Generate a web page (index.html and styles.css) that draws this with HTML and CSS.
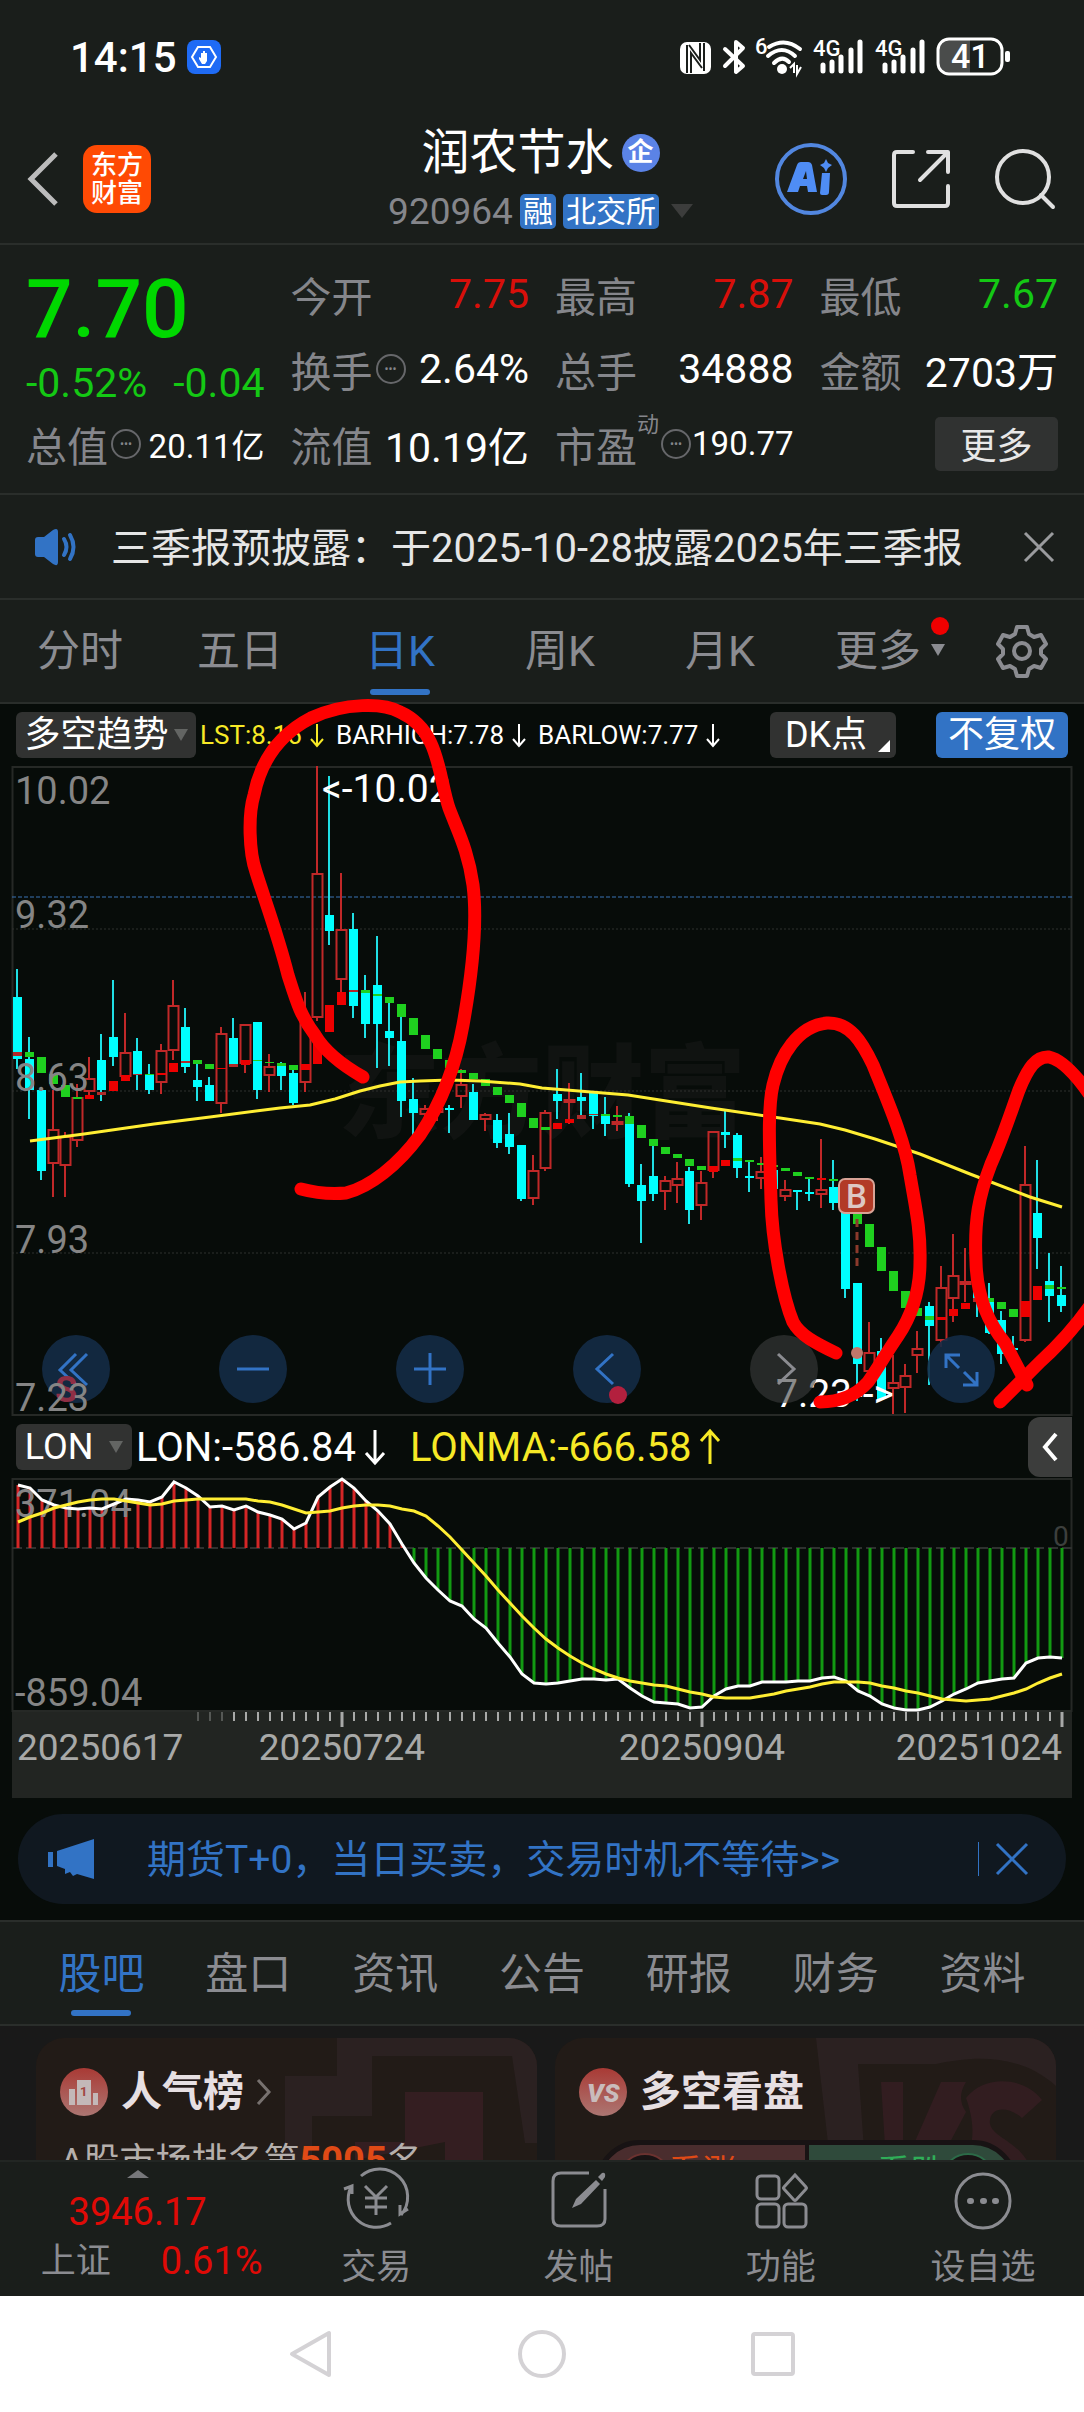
FILE: index.html
```html
<!DOCTYPE html>
<html lang="zh-CN">
<head>
    <meta charset="UTF-8">
    <meta name="viewport" content="width=device-width, initial-scale=1.0">
    <title>润农节水 920964</title>
    <link rel="stylesheet" href="styles.css">
</head>
<body>
    <div class="app">
        <div class="status">
            <span class="time">14:15</span>
            <svg class="status-app" viewBox="0 0 34 34">
                <rect width="34" height="34" rx="8" fill="#1f6bf5"/>
                <path d="M11 7h12l6 10-6 10H11L5 17z" fill="none" stroke="#fff" stroke-width="2"/>
                <path d="M12 17l2 1v-5h2v-2h2v2h2v8l-2 3h-3l-3-5z" fill="#fff"/>
            </svg>
            <svg class="status-icons" viewBox="678 36 334 40">
                <rect x="680" y="41" width="31" height="32" rx="7" fill="#fff"/>
                <path d="M687 72V44M704 42v28" fill="none" stroke="#1a1e1b" stroke-width="2"/>
                <path d="M691 72V52l11 15M689 44l11 15V42" fill="none" stroke="#1a1e1b" stroke-width="2"/>
                <path d="M725 48l18 17-7 6V41l7 6-18 18" fill="none" stroke="#fff" stroke-width="4" stroke-linejoin="round" stroke-linecap="round"/>
                <text x="755" y="53" class="status-small">6</text>
                <g fill="none" stroke="#fff" stroke-width="4" stroke-linecap="round">
                    <path d="M769 46q16-10 31 2M768 55q14-12 27 0M774 62q8-8 15-1"/>
                </g>
                <circle cx="782" cy="68" r="5" fill="#fff"/>
                <path d="M790 67l4-4v9M797 64v9l4-7" stroke="#fff" stroke-width="2" fill="none"/>
                <text x="813" y="55" class="status-small">4G</text>
                <path d="M823 64v6M832 61v9M841 56v14M851 49v21M860 41v29" stroke="#fff" stroke-width="5" stroke-linecap="round"/>
                <text x="875" y="55" class="status-small">4G</text>
                <path d="M885 64v6M894 61v9M903 56v14M913 49v21M922 41v29" stroke="#fff" stroke-width="5" stroke-linecap="round"/>
                <path d="M948 39h22v33h-22q-9 0-9-9V48q0-9 9-9z" fill="#4a4c4b"/>
                <rect x="938" y="38" width="64" height="35" rx="11" fill="none" stroke="#fff" stroke-width="3"/>
                <rect x="1005" y="50" width="5" height="11" rx="2" fill="#fff"/>
                <text x="951" y="67" class="status-battery">41</text>
            </svg>
        </div>

        <header class="header">
            <button class="back" aria-label="返回">
                <svg width="34" height="56" viewBox="0 0 34 56"><path d="M30 3L5 28l25 25" fill="none" stroke="#bcbcbc" stroke-width="5"/></svg>
            </button>
            <a class="logo" href="#">东方<br>财富</a>
            <div class="stock">
                <h1>润农节水<span class="ent">企</span></h1>
                <div class="code">920964<span class="tag">融</span><span class="tag">北交所</span><i class="arrow"></i></div>
            </div>
            <button class="head-btn" aria-label="AI">
                <svg width="74" height="74" viewBox="0 0 74 74">
                    <circle cx="37" cy="37" r="34" fill="none" stroke="#5287e0" stroke-width="4"/>
                    <path d="M13 50l10-27q1-3 4-3h7q3 0 4 3l5 27h-9l-1-6h-7l-2 6zM29 37h4l-1-8z" fill="#4f8df5" fill-rule="evenodd"/>
                    <path d="M48 31h8l-1 19q0 3-3 3h-4q-2 0-2-2zM52 17l2 4 4 2-4 3-2 4-2-4-4-3 4-2z" fill="#4f8df5"/>
                </svg>
            </button>
            <button class="head-btn" aria-label="分享">
                <svg width="60" height="60" viewBox="0 0 60 60" fill="none" stroke="#e0e0e0" stroke-width="4" stroke-linecap="round" stroke-linejoin="round">
                    <path d="M22 3H6q-3 0-3 3v48q0 3 3 3h48q3 0 3-3V37M37 3h20v20M56 4L29 31"/>
                </svg>
            </button>
            <button class="head-btn" aria-label="搜索">
                <svg width="62" height="62" viewBox="0 0 62 62" fill="none" stroke="#e0e0e0" stroke-width="4" stroke-linecap="round">
                    <circle cx="29" cy="29" r="26"/><path d="M47 47l12 12"/>
                </svg>
            </button>
        </header>

        <section class="quote">
            <div class="now">
                <strong>7.70</strong>
                <span>-0.52%</span><span>-0.04</span>
            </div>
            <div class="item"><span class="name">今开</span><b class="up">7.75</b></div>
            <div class="item"><span class="name">最高</span><b class="up">7.87</b></div>
            <div class="item"><span class="name">最低</span><b class="down">7.67</b></div>
            <div class="item"><span class="name">换手</span><i class="dots">•••</i><b>2.64%</b></div>
            <div class="item"><span class="name">总手</span><b>34888</b></div>
            <div class="item"><span class="name">金额</span><b>2703万</b></div>
            <div class="item"><span class="name">总值</span><i class="dots">•••</i><b class="small">20.11亿</b></div>
            <div class="item"><span class="name">流值</span><b>10.19亿</b></div>
            <div class="item"><span class="name">市盈<sup>动</sup></span><i class="dots wide">•••</i><b class="small">190.77</b></div>
            <button class="more">更多</button>
        </section>

        <div class="notice">
            <svg width="44" height="38" viewBox="0 0 44 38">
                <path d="M2 12q0-3 3-3h6L20 2q5-3 5 2v30q0 5-5 2l-9-7H5q-3 0-3-3z" fill="#3273c5"/>
                <path d="M31 11q5 8 0 16M37 7q7 12 0 24" fill="none" stroke="#3273c5" stroke-width="4" stroke-linecap="round"/>
            </svg>
            <p>三季报预披露：于2025-10-28披露2025年三季报</p>
            <button aria-label="关闭">
                <svg width="32" height="32" viewBox="0 0 32 32"><path d="M2 2l28 28M30 2L2 30" stroke="#9a9b9e" stroke-width="3"/></svg>
            </button>
        </div>

        <nav class="periods">
            <a href="#">分时</a>
            <a href="#">五日</a>
            <a href="#" class="active">日K</a>
            <a href="#">周K</a>
            <a href="#">月K</a>
            <a href="#" class="has-dot">更多<i class="arrow"></i></a>
            <button aria-label="设置">
                <svg width="52" height="52" viewBox="0 0 52 52" fill="none" stroke="#8b8c91" stroke-width="4" stroke-linejoin="round">
                    <path d="M21 2h10l2 7 5 3 7-2 5 9-5 5v5l5 5-5 9-7-2-5 3-2 7H21l-2-7-5-3-7 2-5-9 5-5v-5l-5-5 5-9 7 2 5-3z"/>
                    <circle cx="26" cy="26" r="8"/>
                </svg>
            </button>
        </nav>

        <section class="chart">
            <div class="toolbar">
                <button class="pick">多空趋势<i class="arrow"></i></button>
                <div class="legend small-legend">
                    <span class="yellow">LST:8.16<svg class="dir" viewBox="0 0 14 26"><path d="M7 2v22M1 17l6 7 6-7"/></svg></span>
                    <span>BARHIGH:7.78<svg class="dir" viewBox="0 0 14 26"><path d="M7 2v22M1 17l6 7 6-7"/></svg></span>
                    <span>BARLOW:7.77<svg class="dir" viewBox="0 0 14 26"><path d="M7 2v22M1 17l6 7 6-7"/></svg></span>
                </div>
                <button class="dk">DK点</button>
                <button class="fq">不复权</button>
            </div>
            <div class="price">
                <svg id="price" viewBox="0 0 1084 650"></svg>
                <div class="controls">
                    <button aria-label="最早"><svg viewBox="0 0 68 68"><path d="M34 19L18 35l16 15M45 19L29 35l16 15"/></svg></button>
                    <button aria-label="缩小"><svg viewBox="0 0 68 68"><path d="M18 34h32"/></svg></button>
                    <button aria-label="放大"><svg viewBox="0 0 68 68"><path d="M18 34h32M34 18v32"/></svg></button>
                    <button aria-label="左移"><svg viewBox="0 0 68 68"><path d="M40 19L24 34l16 15"/></svg></button>
                    <button aria-label="右移" class="off"><svg viewBox="0 0 68 68"><path d="M28 19l16 15-16 15"/></svg></button>
                    <button aria-label="全屏"><svg viewBox="0 0 68 68"><path d="M19 33V20h14M20 21l12 12M50 37v13H36M49 49L37 37"/></svg></button>
                </div>
                <svg class="marks" id="marks" viewBox="0 0 1084 650"></svg>
            </div>
            <div class="toolbar">
                <button class="pick lon">LON<i class="arrow"></i></button>
                <div class="legend">
                    <span>LON:-586.84<svg class="dir" viewBox="0 0 22 36"><path d="M11 1v33M2 24l9 10 9-10"/></svg></span>
                    <span class="yellow">LONMA:-666.58<svg class="dir" viewBox="0 0 22 36"><path d="M11 35V2M2 12l9-10 9 10"/></svg></span>
                </div>
                <button class="side" aria-label="展开">
                    <svg width="18" height="30" viewBox="0 0 18 30"><path d="M15 2L4 15l11 13" fill="none" stroke="#fff" stroke-width="4"/></svg>
                </button>
            </div>
            <svg id="lon" viewBox="0 0 1084 234"></svg>
            <svg id="axis" viewBox="0 0 1084 86"></svg>
            <!-- freehand pen marks over the chart -->
            <svg class="pen" viewBox="0 704 1084 712">
                <path d="M363 1077Q328 1057 315 1035C300 1015 296 1000 288 975C278 935 263 895 256 872C249 852 248 815 254 795C262 755 284 732 311 718C345 702 384 703 400 712C440 730 438 775 449 808C458 832 468 850 473 885C478 925 472 975 463 1025C455 1070 440 1105 420 1135C398 1165 370 1187 346 1193Q323 1195 301 1189"/>
                <path d="M836 1353C815 1343 800 1335 793 1322C782 1295 772 1240 771 1200C770 1160 767 1110 773 1085C780 1055 798 1026 827 1023C850 1022 862 1042 873 1065C885 1095 905 1140 910 1175C915 1205 921 1230 920 1262C920 1290 912 1315 898 1336C885 1355 878 1368 868 1382Q850 1402 820 1402"/>
                <path d="M1027 1385L1005 1343C990 1325 977 1300 976 1262C974 1220 979 1195 991 1164C1002 1140 1010 1115 1019 1090C1028 1068 1036 1056 1049 1057Q1067 1061 1092 1098"/>
                <path d="M1092 1303Q1070 1335 1040 1362L1000 1402"/>
            </svg>
            <div class="ad">
                <svg width="48" height="40" viewBox="0 0 48 40" fill="#3273c5"><path d="M0 13h5v15H0zM9 12L46 0v40l-17-5-4 2-3-4-5 2v-5l-8-3z"/></svg>
                <a href="#">期货T+0，当日买卖，交易时机不等待&gt;&gt;</a>
                <button aria-label="关闭广告">
                    <svg width="34" height="34" viewBox="0 0 34 34"><path d="M2 2l30 30M32 2L2 32" stroke="#3273c5" stroke-width="3"/></svg>
                </button>
            </div>
        </section>

        <nav class="tabs">
            <a href="#" class="active">股吧</a>
            <a href="#">盘口</a>
            <a href="#">资讯</a>
            <a href="#">公告</a>
            <a href="#">研报</a>
            <a href="#">财务</a>
            <a href="#">资料</a>
        </nav>

        <main class="cards">
            <article class="card">
                <svg class="card-bg" viewBox="0 0 290 140">
                    <path d="M90 0h200v105h-12L265 18H125v60H65v62H38V38h52z" fill="#2b2121"/>
                    <path d="M158 54h78v86h-38v-36l-90 18v-18h50z" fill="#341e21"/>
                </svg>
                <h2>
                    <svg width="48" height="48" viewBox="0 0 48 48">
                        <defs><linearGradient id="g" x2="0" y2="1"><stop stop-color="#a93a35"/><stop offset="1" stop-color="#ac7672"/></linearGradient></defs>
                        <circle cx="24" cy="24" r="24" fill="url(#g)"/>
                        <path d="M9 21h6v16H9zM17 12h14v25H17zM33 25h5v12h-5z" fill="#c3b8b8"/>
                        <text x="20" y="28" class="medal">1</text>
                    </svg>
                    人气榜
                    <svg width="14" height="26" viewBox="0 0 14 26"><path d="M1 1l11 12L1 25" fill="none" stroke="#77716f" stroke-width="3"/></svg>
                </h2>
                <p>A股市场排名第<em>5005</em>名</p>
            </article>
            <article class="card">
                <svg class="card-bg" viewBox="0 0 290 140">
                    <path d="M50 0h240v48C250 12 200 20 170 26H92l8 114H66z" fill="#2b2121"/>
                    <path d="M115 44h22v96h-16zM175 44h25q-10 16 0 30l-35 66h-32zM200 60c20-25 60-20 76 2l-20 18c-16-14-34-10-32 6 4 16 36 18 44 54h-70c-6-14 20-30 2-80z" fill="#321d20"/>
                </svg>
                <h2>
                    <svg width="48" height="48" viewBox="0 0 48 48">
                        <circle cx="24" cy="24" r="24" fill="url(#g)"/>
                        <text x="8" y="34" class="vs">VS</text>
                    </svg>
                    多空看盘
                </h2>
                <div class="vote"><button class="bull">看涨</button><button class="bear">看跌</button></div>
            </article>
        </main>

        <nav class="bottom">
            <a href="#" class="index">
                <svg width="22" height="8" viewBox="0 0 22 8"><path d="M0 8L11 0l11 8z" fill="#77787b"/></svg>
                <b>3946.17</b>
                <span>上证<b>0.61%</b></span>
            </a>
            <a href="#">
                <svg viewBox="0 0 66 60"><path d="M18 6A28 28 0 0 1 58 45M48 53A28 28 0 0 1 8 17M1 19l8-3v8M65 39l-8 5V35M22 16l11 11 11-11M33 27v18M22 28h22M22 37h22"/></svg>
                交易
            </a>
            <a href="#">
                <svg viewBox="0 0 58 60"><path d="M39 3H11q-8 0-8 8v38q0 7 8 7h36q8 0 8-7V19"/><path d="M22 38l4-9L46 10l4 4-19 20zM48 7l4-4q4-1 3 4l-3 4z" fill="#8b8c91" stroke="none"/></svg>
                发帖
            </a>
            <a href="#">
                <svg viewBox="0 0 56 60"><rect x="4" y="6" width="22" height="23" rx="4"/><rect x="4" y="34" width="22" height="23" rx="4"/><rect x="31" y="34" width="22" height="23" rx="4"/><path d="M42 5l11 12q1 1 0 2L43 30q-1 1-2 0L31 19q-1-1 0-2z"/></svg>
                功能
            </a>
            <a href="#">
                <svg viewBox="0 0 60 60"><circle cx="30" cy="31" r="27"/><path d="M17 31h1M30 31h1M42 31h1" stroke-width="6" stroke-linecap="round"/></svg>
                设自选
            </a>
        </nav>

        <div class="sysnav">
            <button aria-label="后退"><svg width="46" height="50" viewBox="0 0 46 50"><path d="M41 4v42L4 25z"/></svg></button>
            <button aria-label="主页"><svg width="50" height="50" viewBox="0 0 50 50"><circle cx="25" cy="25" r="22"/></svg></button>
            <button aria-label="最近"><svg width="46" height="50" viewBox="0 0 46 50"><rect x="3" y="5" width="40" height="40" rx="2"/></svg></button>
        </div>
    </div>
    <script src="chart.js"></script>
</body>
</html>
```
FILE: styles.css
```css
* {
    box-sizing: border-box;
}

body {
    margin: 0;
    background: #1a1e1b;
    color: #fff;
    font-family: Roboto, "Noto Sans CJK SC", sans-serif;
}

button {
    padding: 0;
    border: none;
    background: none;
    color: inherit;
    font-family: inherit;
    cursor: pointer;
}

a {
    color: inherit;
    text-decoration: none;
}

svg {
    display: block;
    flex-shrink: 0;
    overflow: visible;
}

.app {
    display: flex;
    flex-direction: column;
    height: 100vh;
    overflow: hidden;
}

.app > * {
    flex-shrink: 0;
}

.arrow {
    display: inline-block;
    border: 7px solid transparent;
    border-top: 12px solid #636563;
    border-bottom: none;
}

/* status bar */
.status {
    display: flex;
    align-items: center;
    height: 114px;
    padding: 0 72px 0 70px;
}

.time {
    font-size: 42px;
    font-weight: 500;
    margin-right: 10px;
}

.status-app {
    width: 34px;
}

.status-icons {
    width: 334px;
    margin-left: auto;
}

.status-small {
    font-size: 22px;
    font-weight: 500;
    fill: #fff;
}

.status-battery {
    font-size: 34px;
    font-weight: 500;
    fill: #fff;
}

/* header */
.header {
    display: flex;
    align-items: center;
    height: 131px;
    padding: 0 28px 0 26px;
    border-bottom: 2px solid #2a2e2b;
}

.logo {
    display: flex;
    align-items: center;
    justify-content: center;
    width: 68px;
    height: 68px;
    margin-left: 23px;
    border-radius: 14px;
    background: #ff4a04;
    font-size: 26px;
    font-weight: 500;
    line-height: 28px;
}

.stock {
    flex: 1;
    padding: 5px 0 0 230px;
    text-align: center;
    white-space: nowrap;
}

.stock h1 {
    display: flex;
    align-items: center;
    justify-content: center;
    margin: 0;
    font-size: 48px;
    font-weight: 400;
    line-height: 60px;
}

.ent {
    width: 38px;
    height: 38px;
    margin-left: 8px;
    border-radius: 50%;
    background: #5b83e6;
    font-size: 26px;
    font-weight: 700;
    line-height: 37px;
}

.code {
    display: flex;
    align-items: center;
    justify-content: center;
    gap: 7px;
    height: 56px;
    color: #85868b;
    font-size: 37px;
}

.tag {
    padding: 0 3px;
    border-radius: 5px;
    background: #3273c5;
    color: #fff;
    font-size: 30px;
    line-height: 35px;
}

.code .arrow {
    margin-left: 5px;
    border-width: 14px 11px 0;
    border-top-color: #3c3d3c;
}

.head-btn {
    margin-left: 43px;
}

.stock + .head-btn {
    margin-left: 74px;
}

/* quote */
.quote {
    display: grid;
    grid-template-columns: repeat(4, 1fr);
    grid-template-rows: repeat(3, 75px);
    column-gap: 26px;
    height: 250px;
    padding: 11px 26px;
    border-bottom: 2px solid #2a2e2b;
}

.now {
    grid-row: span 2;
    display: flex;
    flex-wrap: wrap;
    justify-content: space-between;
    align-content: center;
    padding-top: 12px;
    color: #14c814;
    font-size: 41px;
    line-height: 56px;
}

.now strong {
    width: 100%;
    color: #00d800;
    font-size: 82px;
    font-weight: 500;
    line-height: 92px;
}

.item {
    display: flex;
    align-items: center;
    font-size: 41px;
}

.name {
    position: relative;
    color: #85868b;
}

.name sup {
    position: absolute;
    top: -8px;
    left: 100%;
    font-size: 22px;
}

.item b {
    margin-left: auto;
    font-weight: 400;
}

.item b.small {
    font-size: 33px;
}

.item b.up {
    color: #d80f0a;
}

.item b.down {
    color: #14c814;
}

.dots {
    width: 30px;
    height: 30px;
    margin-left: 3px;
    border: 2px solid #66676a;
    border-radius: 50%;
    color: #85868b;
    font-size: 12px;
    font-style: normal;
    line-height: 26px;
    text-align: center;
}

.dots.wide {
    margin-left: 24px;
}

.more {
    justify-self: end;
    align-self: center;
    width: 123px;
    height: 54px;
    padding-bottom: 4px;
    border-radius: 5px;
    background: #303231;
    color: #e8e8e8;
    font-size: 36px;
}

/* notice */
.notice {
    display: flex;
    align-items: center;
    height: 105px;
    padding: 0 29px 0 33px;
    border-bottom: 2px solid #2a2e2b;
}

.notice p {
    flex: 1;
    margin: 0 0 4px 34px;
    color: #e6e6e6;
    font-size: 40px;
    white-space: nowrap;
}

/* tabs */
.periods {
    display: flex;
    align-items: center;
    height: 104px;
    border-bottom: 2px solid #2a2e2b;
    color: #8b8c91;
    font-size: 43px;
}

.periods a,
.tabs a {
    position: relative;
    flex: 1;
    line-height: 104px;
    text-align: center;
}

.periods button {
    width: 124px;
}

.periods button svg {
    margin: 0 auto;
}

.periods .arrow {
    margin-left: 10px;
    vertical-align: 10px;
    border-top-color: #8b8c91;
}

.periods .has-dot {
    text-indent: 20px;
}

.has-dot::after {
    content: "";
    position: absolute;
    top: 18px;
    right: 11px;
    width: 18px;
    height: 18px;
    border-radius: 50%;
    background: #f00000;
}

.active {
    color: #3273c5;
}

.active::after {
    content: "";
    position: absolute;
    bottom: 8px;
    left: 50%;
    width: 60px;
    height: 6px;
    margin-left: -30px;
    border-radius: 3px;
    background: #3273c5;
}

.tabs {
    display: flex;
    height: 106px;
    padding: 0 28px;
    border-top: 2px solid #2a2e2b;
    border-bottom: 2px solid #2a2e2b;
    color: #8b8c91;
    font-size: 43px;
}

/* chart */
.chart {
    position: relative;
    background: #070c09;
    padding-bottom: 16px;
}

.toolbar {
    display: flex;
    align-items: center;
    height: 62px;
    padding: 0 16px;
}

.toolbar button {
    height: 46px;
    border-radius: 6px;
    background: #313231;
    font-size: 36px;
    line-height: 44px;
    white-space: nowrap;
}

.toolbar .pick {
    display: flex;
    align-items: center;
    justify-content: center;
    gap: 5px;
    width: 180px;
}

.toolbar .pick.lon {
    width: 116px;
    gap: 16px;
}

.legend {
    display: flex;
    flex: 1;
    gap: 24px;
    padding-left: 4px;
    font-size: 40px;
}

.small-legend {
    gap: 12px;
    font-size: 26px;
}

.legend span {
    display: flex;
    align-items: center;
    gap: 8px;
    white-space: nowrap;
}

.yellow {
    color: #f7e926;
}

.dir {
    width: 22px;
    fill: none;
    stroke: currentColor;
    stroke-width: 3;
}

.small-legend .dir {
    width: 14px;
    stroke-width: 2;
}

.toolbar .dk {
    position: relative;
    width: 126px;
    padding-right: 14px;
}

.dk::after {
    content: "";
    position: absolute;
    right: 6px;
    bottom: 6px;
    border: 6px solid #fff;
    border-top-color: transparent;
    border-left-color: transparent;
}

.toolbar .fq {
    width: 132px;
    margin-left: 40px;
    background: #3273c5;
}

.toolbar .side {
    width: 44px;
    height: 60px;
    margin-right: -4px;
    border-radius: 12px 0 0 12px;
    background: #3c3d3c;
}

.side svg {
    margin: 0 auto;
}

.price {
    position: relative;
}

.controls {
    position: absolute;
    left: 42px;
    right: 89px;
    bottom: 13px;
    display: flex;
    justify-content: space-between;
}

.controls button {
    width: 68px;
    height: 68px;
    border-radius: 50%;
    background: rgba(20, 43, 70, 0.9);
}

.controls button.off {
    background: rgba(60, 62, 61, 0.6);
}

.controls svg {
    fill: none;
    stroke: #3273c5;
    stroke-width: 3;
}

.controls .off svg {
    stroke: #8b8c91;
}

.marks,
.pen {
    position: absolute;
    top: 0;
    left: 0;
    width: 100%;
    pointer-events: none;
}

.pen {
    fill: none;
    stroke: #ff0000;
    stroke-width: 13;
    stroke-linecap: round;
    stroke-linejoin: round;
}

.scale {
    fill: #858585;
    font-size: 38px;
}

.peak {
    fill: #fff;
    font-size: 39px;
}

.dim {
    fill: #3c3f3d;
    font-size: 28px;
}

.date {
    fill: #a8a9a8;
    font-size: 37px;
}

.watermark {
    fill: #101311;
    font-size: 102px;
    font-weight: 900;
}

.b-mark {
    fill: #ddc8c4;
    font-size: 33px;
    font-weight: 500;
}

.s-mark {
    fill: #8f2f45;
    font-size: 36px;
    font-weight: 700;
}

.ad {
    display: flex;
    align-items: center;
    height: 90px;
    margin: 16px 18px 0;
    padding: 0 37px 0 30px;
    border-radius: 45px;
    background: #101820;
    color: #3273c5;
    font-size: 39px;
}

.ad a {
    flex: 1;
    margin: 0 0 6px 51px;
    white-space: nowrap;
}

.ad button {
    padding-left: 16px;
    border-left: 1px solid #3273c5;
}

/* cards */
.app > .cards {
    flex: 1 1 0;
    display: grid;
    grid-template-columns: 1fr 1fr;
    gap: 18px;
    min-height: 0;
    padding: 12px 28px 0 36px;
    overflow: hidden;
    background: #191919;
}

.card {
    position: relative;
    height: 200px;
    padding: 28px 24px;
    border-radius: 28px;
    background: #221b17;
    overflow: hidden;
}

.card-bg {
    position: absolute;
    top: 0;
    right: 0;
    width: 290px;
}

.card h2 {
    position: relative;
    display: flex;
    align-items: center;
    gap: 13px;
    height: 52px;
    margin: 0;
    color: #e6dfe2;
    font-size: 41px;
    font-weight: 700;
    line-height: 48px;
}

.card p {
    position: relative;
    margin: 14px 0 0;
    color: #b5afac;
    font-size: 36px;
}

.card em {
    color: #e04a16;
    font-size: 38px;
    font-style: normal;
    font-weight: 700;
}

.medal {
    fill: #a04540;
    font-size: 13px;
    font-weight: 700;
}

.vs {
    fill: #c9bcbc;
    font-size: 26px;
    font-style: italic;
    font-weight: 900;
}

.vote {
    position: relative;
    display: flex;
    gap: 4px;
    margin: 22px 14px 0 16px;
    border: 5px solid #181314;
    border-radius: 48px;
    background: #181314;
    overflow: hidden;
}

.vote button {
    position: relative;
    flex: 1;
    height: 80px;
    padding-bottom: 26px;
    font-size: 34px;
    line-height: 46px;
}

.vote button::after {
    content: "";
    position: absolute;
    top: 8px;
    width: 50px;
    height: 50px;
    border-radius: 50%;
    background: #181314;
}

.bull::after {
    left: 18px;
    border: 2px solid #6b3230;
}

.bear::after {
    right: 18px;
    border: 2px solid #2c6b48;
}

.vote .bull {
    background: #4a2d2e;
    color: #e04a16;
}

.vote .bear {
    background: #2f4a3b;
    color: #2fae58;
}

/* bottom bar */
.bottom {
    display: flex;
    height: 136px;
    border-top: 2px solid #222623;
    color: #8b8c91;
    font-size: 35px;
}

.bottom a {
    display: flex;
    flex: 202;
    flex-direction: column;
    align-items: center;
    padding-top: 8px;
    line-height: 76px;
}

.bottom a > svg {
    height: 60px;
    fill: none;
    stroke: #8b8c91;
    stroke-width: 3;
}

.bottom .index {
    flex: 275;
    line-height: 49px;
}

.bottom .index > svg {
    height: 8px;
    margin-bottom: 10px;
    stroke: none;
}

.index b {
    color: #e00a06;
    font-size: 38px;
    font-weight: 400;
}

.index span {
    display: flex;
    justify-content: space-between;
    width: 222px;
    margin-left: 28px;
}

.sysnav {
    display: flex;
    justify-content: center;
    gap: 183px;
    height: 116px;
    background: #fff;
}

.sysnav svg {
    fill: none;
    stroke: #d4d2d5;
    stroke-width: 4;
    stroke-linejoin: round;
}
```
FILE: chart.js
```js
const RED = "#c02828";
const CYAN = "#00ffff";
const GREEN = "#1fd01f";
const STEP = 12;

// [type, high, top, bottom, low, bar type, bar top, bar bottom]
const candles = [
    ["c", 587, 648, 783, 805, "r", 768, 777], ["c", 735, 783, 850, 915, "g", 768, 780],
    ["c", 850, 850, 1027, 1048, "g", 780, 814], ["r", 850, 936, 1013, 1083, "g", 815, 838],
    ["r", 942, 951, 1017, 1083, "g", 840, 866], ["r", 838, 867, 962, 976, "g", 866, 871],
    ["r", 780, 825, 856, 862, "r", 862, 871], ["c", 728, 785, 850, 875, "r", 855, 862],
    ["c", 612, 735, 778, 798, "r", 832, 854], ["r", 684, 769, 822, 830, "r", 818, 831],
    ["c", 738, 765, 815, 850, "r", 815, 818], ["c", 795, 815, 850, 860, "g", 815, 818],
    ["r", 750, 763, 836, 860, "r", 814, 818], ["r", 612, 666, 766, 785, "r", 792, 811],
    ["c", 673, 713, 800, 814, "r", 787, 791], ["c", 795, 830, 845, 875, "g", 786, 795],
    ["c", 822, 840, 875, 875, "g", 795, 805], ["r", 713, 727, 881, 900, "r", 802, 805],
    ["c", 693, 738, 795, 798, "r", 795, 800], ["r", 707, 707, 795, 814, "r", 786, 797],
    ["c", 703, 703, 850, 870, "g", 785, 788], ["r", 773, 798, 821, 856, "g", 789, 793],
    ["c", 790, 798, 820, 850, "g", 793, 798], ["c", 806, 814, 880, 884, "g", 797, 807],
    ["r", 637, 700, 835, 856, "r", 795, 807], ["r", 145, 379, 693, 700, "r", 745, 795],
    ["c", 167, 470, 505, 536, "r", 666, 724], ["r", 379, 500, 612, 640, "r", 638, 665],
    ["c", 465, 500, 668, 693, "r", 633, 637], ["c", 601, 635, 708, 738, "g", 632, 640],
    ["c", 516, 623, 708, 804, "g", 641, 647], ["c", 660, 723, 738, 798, "g", 648, 662],
    ["c", 690, 745, 875, 910, "g", 664, 692], ["c", 825, 870, 900, 955, "g", 694, 730],
    ["r", 884, 890, 906, 910, "g", 730, 761], ["r", 880, 890, 900, 918, "g", 762, 784],
    ["c", 884, 891, 894, 945, "g", 785, 803], ["r", 805, 838, 867, 891, "g", 808, 813],
    ["c", 838, 856, 916, 916, "g", 814, 827], ["r", 900, 904, 917, 940, "g", 828, 843],
    ["c", 903, 916, 966, 977, "g", 844, 861], ["c", 900, 947, 976, 991, "g", 862, 879],
    ["c", 970, 970, 1088, 1092, "g", 880, 909], ["r", 992, 1026, 1089, 1102, "g", 911, 934],
    ["r", 895, 899, 1024, 1027, "g", 932, 938], ["c", 805, 860, 875, 915, "r", 923, 935],
    ["r", 835, 870, 876, 925, "r", 914, 922], ["c", 814, 867, 875, 906, "r", 905, 914],
    ["c", 856, 856, 908, 935, "r", 903, 906], ["c", 866, 903, 926, 952, "g", 903, 908],
    ["r", 885, 919, 923, 940, "g", 906, 910], ["c", 901, 908, 1056, 1062, "g", 908, 926],
    ["c", 1013, 1058, 1092, 1185, "g", 927, 956], ["c", 972, 1038, 1078, 1092, "g", 957, 972],
    ["r", 1038, 1046, 1074, 1113, "g", 974, 990], ["r", 1007, 1042, 1060, 1098, "g", 990, 1000],
    ["c", 1018, 1028, 1113, 1143, "g", 1001, 1017], ["r", 1027, 1052, 1104, 1134, "g", 1017, 1026],
    ["r", 940, 940, 1028, 1042, "r", 1017, 1030], ["c", 892, 942, 948, 977, "r", 1003, 1017],
    ["c", 945, 948, 1021, 1042, "g", 1000, 1006], ["c", 1005, 1039, 1043, 1074, "g", 1004, 1008],
    ["r", 996, 1028, 1044, 1067, "g", 1011, 1014], ["c", 1018, 1026, 1067, 1067, "g", 1014, 1019],
    ["r", 1048, 1066, 1085, 1092, "g", 1020, 1028], ["c", 1068, 1069, 1073, 1113, "g", 1029, 1039],
    ["c", 1045, 1073, 1077, 1092, "g", 1040, 1044], ["r", 957, 1066, 1080, 1107, "r", 1043, 1047],
    ["c", 1003, 1063, 1098, 1113, "g", 1045, 1049], ["c", 1100, 1100, 1285, 1305, "g", 1050, 1092],
    ["c", 1271, 1271, 1447, 1528, "g", 1095, 1142], ["r", 1357, 1422, 1465, 1480, "g", 1143, 1192],
    ["c", 1392, 1420, 1524, 1524, "g", 1193, 1245], ["r", 1428, 1487, 1503, 1557, "g", 1245, 1289],
    ["r", 1448, 1472, 1500, 1554, "g", 1289, 1326], ["r", 1377, 1413, 1430, 1468, "g", 1326, 1343],
    ["c", 1312, 1322, 1366, 1493, "g", 1344, 1351], ["r", 1235, 1279, 1397, 1410, "r", 1345, 1351],
    ["r", 1165, 1254, 1306, 1357, "r", 1328, 1344], ["r", 1195, 1266, 1276, 1312, "r", 1315, 1328],
    ["c", 1240, 1260, 1310, 1345, "r", 1305, 1312], ["c", 1271, 1306, 1380, 1383, "g", 1304, 1312],
    ["c", 1332, 1352, 1426, 1447, "g", 1312, 1328], ["c", 1387, 1413, 1418, 1430, "g", 1328, 1346],
    ["r", 972, 1056, 1397, 1400, "r", 1310, 1346], ["c", 1003, 1119, 1174, 1240, "r", 1278, 1309],
    ["c", 1205, 1266, 1300, 1357, "g", 1276, 1284], ["c", 1235, 1297, 1321, 1335, "g", 1281, 1284]
];

const ma = [[30, 961], [84, 946], [154, 926], [210, 909], [280, 891], [310, 883], [335, 870], [360, 854],
    [380, 842], [400, 834], [420, 831], [450, 830], [480, 832], [520, 838], [542, 846], [628, 861], [711, 891],
    [780, 911], [820, 926], [845, 937], [875, 957], [920, 990], [970, 1033], [1030, 1085], [1062, 1106]];

const lon = [225, 235, 270, 285, 296, 299, 295, 297, 283, 268, 270, 277, 262, 218, 234, 258, 293, 290, 302,
    288, 307, 317, 328, 359, 340, 262, 231, 208, 235, 275, 305, 342, 402, 460, 505, 542, 574, 590, 628, 655,
    700, 742, 792, 820, 824, 820, 813, 808, 808, 812, 809, 835, 858, 877, 879, 882, 894, 891, 860, 838, 830,
    828, 816, 816, 816, 814, 813, 806, 803, 815, 843, 858, 882, 895, 902, 901, 893, 875, 853, 837, 820, 813,
    808, 804, 760, 744, 743, 746];

const lonma = [338, 323, 310, 295, 285, 277, 272, 269, 269, 273, 279, 285, 282, 275, 270, 267, 267, 267, 267,
    269, 273, 277, 287, 299, 310, 308, 303, 294, 288, 285, 286, 289, 297, 305, 320, 350, 382, 420, 460, 500,
    540, 580, 620, 655, 688, 715, 740, 760, 778, 793, 805, 814, 821, 825, 830, 837, 846, 854, 861, 864, 865,
    864, 860, 853, 845, 838, 831, 824, 818, 816, 817, 820, 828, 834, 843, 851, 860, 867, 870, 873, 870, 867,
    858, 849, 837, 820, 805, 792];

const x = i => 18 + i * STEP;

function rect(x, y, w, h, fill) {
    return `<rect x="${x}" y="${y}" width="${w}" height="${Math.max(h, 1)}" fill="${fill}"/>`;
}

function line(x1, y1, x2, y2, color, width, extra) {
    return `<line x1="${x1}" y1="${y1}" x2="${x2}" y2="${y2}" stroke="${color}" stroke-width="${width}" ${extra || ""}/>`;
}

function drawPrice() {
    const y = v => Math.round((v - 145) * 0.459);
    let out = `<text x="338" y="364" class="watermark">东方财富</text>`;
    out += `<rect x="12.5" y="1" width="1059" height="648" fill="none" stroke="#262926" stroke-width="2"/>`;
    [163, 325, 487].forEach(g => out += line(12, g, 1072, g, "#2e312f", 1, 'stroke-dasharray="2 2"'));
    out += line(12, 131, 1072, 131, "#3b72b4", 1, 'stroke-dasharray="4 2"');

    candles.forEach((c, i) => {
        const [type, high, top, bottom, low, bar, barTop, barBottom] = c;
        const cx = x(i) - 1;
        const left = cx - 4;
        if (type === "c") {
            out += line(cx, y(high), cx, y(low), "#1fdfe4", 2);
            out += rect(left, y(top), 9, y(bottom) - y(top), CYAN);
        } else {
            out += line(cx, y(high), cx, y(top), RED, 2);
            out += line(cx, y(bottom), cx, y(low), RED, 2);
            out += `<rect x="${left - 0.5}" y="${y(top) + 1}" width="10" height="${Math.max(y(bottom) - y(top) - 2, 2)}" fill="none" stroke="${RED}" stroke-width="2"/>`;
        }
        out += rect(left, y(barTop), 9, y(barBottom) - y(barTop), bar === "g" ? GREEN : (type === "c" && barBottom - barTop < 10 ? "#b02a2a" : "#ee0000"));
    });

    out += `<polyline points="${ma.map(p => p[0] + "," + y(p[1])).join(" ")}" fill="none" stroke="#ffee33" stroke-width="3" stroke-linejoin="round"/>`;
    out += `<text x="776" y="641" class="peak">7.23--&gt;</text>`;
    document.getElementById("price").innerHTML = out;

    // labels that stay above the round buttons
    let marks = "";
    marks += `<text x="55" y="636" class="s-mark">S</text>`;
    [["10.02", 38], ["9.32", 162], ["8.63", 325], ["7.93", 487], ["7.23", 645]].forEach(t => {
        marks += `<text x="15" y="${t[1]}" class="scale">${t[0]}</text>`;
    });
    marks += `<text x="322" y="36" class="peak">&lt;-10.02</text>`;
    marks += line(857, 440, 857, 505, "#8c3a2c", 3, 'stroke-dasharray="8 5"');
    marks += `<rect x="839" y="413" width="35" height="34" rx="6" fill="#b23a26" stroke="#d8a396" stroke-width="2"/>`;
    marks += `<text x="846" y="442" class="b-mark">B</text>`;
    marks += `<circle cx="857" cy="587" r="6" fill="#c0776b"/><circle cx="618" cy="629" r="9" fill="#b3203e"/>`;
    document.getElementById("marks").innerHTML = marks;
}

function drawLon() {
    const y = v => Math.round((v - 205) / 3);
    const zero = 70;
    let out = `<rect x="12.5" y="1" width="1059" height="232" fill="none" stroke="#262926" stroke-width="2"/>`;
    out += line(12, zero, 1072, zero, "#2e312f", 2, 'stroke-dasharray="10 4"');
    lon.forEach((v, i) => out += line(x(i), zero, x(i), y(v), v < 415 ? "#d42626" : "#129a12", 3));
    out += `<text x="15" y="39" class="scale">371.04</text>`;
    out += `<text x="15" y="228" class="scale">-859.04</text>`;
    out += `<text x="1053" y="68" class="dim">0</text>`;
    const points = list => list.map((v, i) => x(i) + "," + y(v)).join(" ");
    out += `<polyline points="${points(lon)}" fill="none" stroke="#ffffff" stroke-width="3"/>`;
    out += `<polyline points="${points(lonma)}" fill="none" stroke="#ffee33" stroke-width="3"/>`;
    document.getElementById("lon").innerHTML = out;
}

function drawAxis() {
    let out = rect(12, 0, 1060, 86, "#222522");
    for (let i = 15; i < 88; i++) {
        const major = i === 27 || i === 57 || i === 87;
        out += line(x(i), 0, x(i), major ? 15 : 9, i < 18 ? "#555855" : "#a8a9a8", major ? 3 : 2);
    }
    [["20250617", 17, "start"], ["20250724", 342, "middle"], ["20250904", 702, "middle"], ["20251024", 1062, "end"]].forEach(d => {
        out += `<text x="${d[1]}" y="48" class="date" text-anchor="${d[2]}">${d[0]}</text>`;
    });
    document.getElementById("axis").innerHTML = out;
}

drawPrice();
drawLon();
drawAxis();
```
